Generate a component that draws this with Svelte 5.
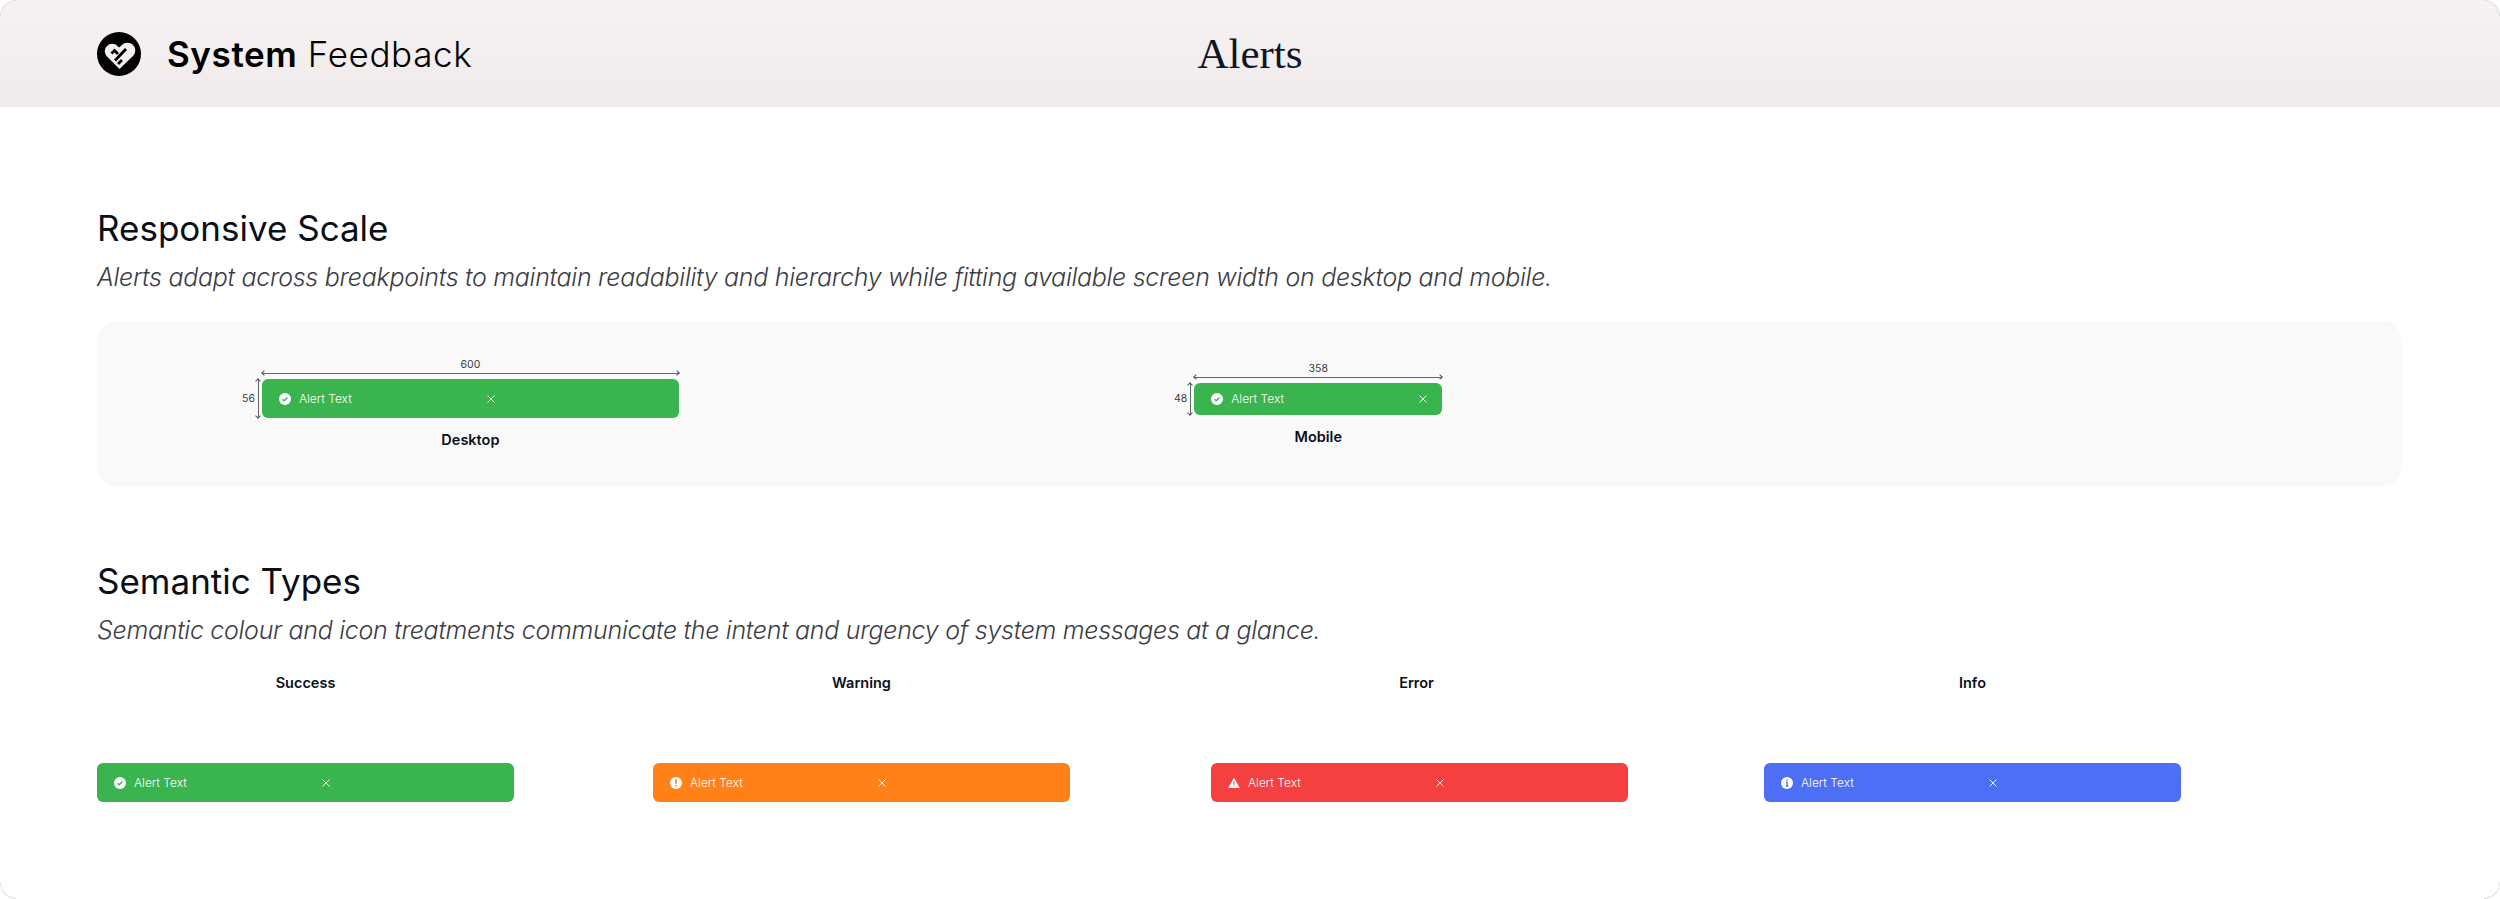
<script>
    const types = [
        { name: 'Success', cls: 'success', icon: 'check', col: 556 },
        { name: 'Warning', cls: 'warning', icon: 'warn', col: 558 },
        { name: 'Error', cls: 'error', icon: 'triangle', col: 553 },
        { name: 'Info', cls: 'info', icon: 'info', col: 417 }
    ];
    const columns = types.map((t) => t.col + 'px').join(' ');
</script>

{#snippet alertIcon(kind)}
    <svg class="icon" viewBox="0 0 12 12">
        {#if kind === 'triangle'}
            <path d="M6 .8 11.8 11H.2z" fill="#fff" />
            <path d="M6 4.2v3.4M6 8.6v1" stroke="#f44040" stroke-width="1.1" fill="none" />
        {:else}
            <circle cx="6" cy="6" r="6" fill="#fff" />
            {#if kind === 'check'}
                <path d="M3.6 6.2 5.3 7.8 8.4 4.6" stroke="#39b44f" stroke-width="1.4" fill="none" />
            {:else if kind === 'warn'}
                <path d="M6 2.4v4.4M6 7.9v1.6" stroke="#ff8117" stroke-width="1.7" fill="none" />
            {:else}
                <path d="M6 2.6v1.3M5 5.4h1.1v3.4M4.8 9h2.5" stroke="#4d6ff5" stroke-width="1.3" fill="none" />
            {/if}
        {/if}
    </svg>
{/snippet}

{#snippet alert(cls, icon, small)}
    <div class="alert {cls}" class:small>
        <div class="alert-inner">
            <div class="alert-main">
                {@render alertIcon(icon)}
                <span>Alert Text</span>
            </div>
            <svg class="close" viewBox="0 0 8 8">
                <path d="M.5.5l7 7M7.5.5l-7 7" stroke="#fff" stroke-width=".9" fill="none" />
            </svg>
        </div>
    </div>
{/snippet}

{#snippet measured(width, height, label, small)}
    <div class="spec" class:small>
        <div class="spec-h">
            <span class="dim">{height}</span>
            <div class="arrow-v"></div>
        </div>
        <div class="spec-body">
            <span class="dim">{width}</span>
            <div class="arrow-h"></div>
            {@render alert('success', 'check', small)}
            <div class="spec-label">{label}</div>
        </div>
    </div>
{/snippet}

<div class="page">
    <span class="corner tl"></span>
    <span class="corner tr"></span>
    <span class="corner bl"></span>
    <span class="corner br"></span>
    <header>
        <div class="brand">
            <svg class="logo" viewBox="0 0 44 44">
                <circle cx="22" cy="22" r="22" fill="#000" />
                <path
                    d="M22.5 37 10.5 25c-3.5-3.5-3.5-8-.5-11 3-3 7.500-3 10.500 0l1.500 1.500 3-2.500c3-3 8-3 11 0 3 3 3 8 0 11z"
                    fill="#f4efef" />
                <path d="M14.500 21.500l3-3 3.500 3.500M18 28.500l11-11.500M21 32l4-4" stroke="#000" stroke-width="2.800" fill="none" />
            </svg>
            <div class="brand-name"><b>System</b> Feedback</div>
        </div>
        <h1>Alerts</h1>
    </header>

    <main>
        <section>
            <h2>Responsive Scale</h2>
            <p>Alerts adapt across breakpoints to maintain readability and hierarchy while fitting available screen width on desktop and mobile.</p>
            <div class="panel">
                <div class="panel-col first">
                    {@render measured(600, 56, 'Desktop', false)}
                </div>
                <div class="panel-col">
                    {@render measured(358, 48, 'Mobile', true)}
                </div>
            </div>
        </section>

        <section class="semantic">
            <h2>Semantic Types</h2>
            <p>Semantic colour and icon treatments communicate the intent and urgency of system messages at a glance.</p>
            <div class="types" style="grid-template-columns: {columns}">
                {#each types as t}
                    <div class="type">
                        <div class="type-label">{t.name}</div>
                        {@render alert(t.cls, t.icon, false)}
                    </div>
                {/each}
            </div>
        </section>
    </main>
</div>

<style>
    :global(body) {
        background: #fff;
    }

    .page {
        position: relative;
        height: 899px;
        overflow: hidden;
        border-radius: 16px;
        background: #fff;
        font-family: Inter, 'Liberation Sans', sans-serif;
        color: #0b0f1a;
    }

    /* hairline only shows on the rounded corners */
    .corner {
        position: absolute;
        z-index: 1;
        width: 16px;
        height: 16px;
        box-sizing: border-box;
        border: 0 solid #dcdcdc;
    }

    .tl {
        top: 0;
        left: 0;
        border-width: 1px 0 0 1px;
        border-top-left-radius: 16px;
    }

    .tr {
        top: 0;
        right: 0;
        border-width: 1px 1px 0 0;
        border-top-right-radius: 16px;
    }

    .bl {
        bottom: 0;
        left: 0;
        border-width: 0 0 1px 1px;
        border-bottom-left-radius: 16px;
    }

    .br {
        bottom: 0;
        right: 0;
        border-width: 0 1px 1px 0;
        border-bottom-right-radius: 16px;
    }

    header {
        position: relative;
        height: 107px;
        padding-left: 97px;
        display: flex;
        align-items: center;
        background: linear-gradient(180deg, #f6f1f2 0%, #f0eaeb 100%);
    }

    .brand {
        display: flex;
        align-items: center;
        gap: 26px;
    }

    .logo {
        width: 44px;
        height: 44px;
    }

    .brand-name {
        font-size: 35px;
        font-weight: 300;
        color: #000;
        letter-spacing: 0.6px;
    }

    .brand-name b {
        font-weight: 600;
    }

    h1 {
        position: absolute;
        left: 0;
        right: 0;
        margin: 0;
        text-align: center;
        font-family: 'Liberation Serif', serif;
        font-size: 43px;
        font-weight: 400;
        color: #0f1524;
    }

    main {
        padding: 98px 98px 0 97px;
    }

    h2 {
        margin: 0;
        font-size: 35px;
        line-height: 46px;
        font-weight: 400;
    }

    section p {
        margin: 8px 0 0;
        font-size: 25px;
        line-height: 36px;
        font-style: italic;
        font-weight: 300;
        letter-spacing: -0.29px;
        color: #3a3d45;
    }

    .panel {
        margin-top: 26px;
        height: 165px;
        background: #f9f9f9;
        border-radius: 20px;
        display: flex;
        align-items: center;
    }

    .panel-col {
        padding-left: 145px;
    }

    .panel-col.first {
        width: 787px;
    }

    .spec {
        display: flex;
        align-items: flex-start;
        gap: 3px;
    }

    .spec-h {
        display: flex;
        align-items: center;
        gap: 3px;
        margin-top: 21px;
        height: 39px;
    }

    .spec.small .spec-h {
        height: 32px;
    }

    .dim {
        font-size: 10.5px;
        line-height: 13px;
        color: #3c3c3c;
    }

    .arrow-v {
        position: relative;
        width: 1px;
        height: 100%;
        background: #666;
    }

    .arrow-v::before,
    .arrow-v::after,
    .arrow-h::before,
    .arrow-h::after {
        content: '';
        position: absolute;
        width: 4px;
        height: 4px;
        border: solid #555;
        box-sizing: border-box;
    }

    .arrow-v::before {
        top: 0;
        left: -2px;
        border-width: 1px 0 0 1px;
        transform: rotate(45deg);
    }

    .arrow-v::after {
        bottom: 0;
        left: -2px;
        border-width: 0 1px 1px 0;
        transform: rotate(45deg);
    }

    .spec-body {
        display: flex;
        flex-direction: column;
        align-items: center;
    }

    .arrow-h {
        position: relative;
        width: 100%;
        height: 1px;
        background: #666;
        margin: 2px 0 5px;
    }

    .arrow-h::before {
        left: 0;
        top: -2px;
        border-width: 1px 0 0 1px;
        transform: rotate(-45deg);
    }

    .arrow-h::after {
        right: 0;
        top: -2px;
        border-width: 1px 1px 0 0;
        transform: rotate(45deg);
    }

    .spec-label,
    .type-label {
        font-size: 14.5px;
        line-height: 18px;
        font-weight: 600;
        text-align: center;
    }

    .spec-label {
        margin-top: 13px;
    }

    .alert {
        width: 417px;
        height: 39px;
        box-sizing: border-box;
        padding-left: 17px;
        border-radius: 6px;
        display: flex;
        align-items: center;
        color: #fff;
    }

    .alert.small {
        width: 248px;
        height: 32px;
    }

    .alert-inner {
        width: 216px;
        display: flex;
        align-items: center;
        justify-content: space-between;
    }

    .alert-main {
        display: flex;
        align-items: center;
        gap: 8px;
        font-size: 12px;
        font-weight: 300;
    }

    .icon {
        width: 12px;
        height: 12px;
    }

    .close {
        width: 8px;
        height: 8px;
    }

    .success {
        background: #39b44f;
    }

    .warning {
        background: #ff8117;
    }

    .error {
        background: #f44040;
    }

    .info {
        background: #4d6ff5;
    }

    .semantic {
        margin-top: 72px;
    }

    .types {
        display: grid;
        margin-top: 26px;
    }

    .type-label {
        width: 417px;
        margin-bottom: 71px;
    }

    .type:nth-child(3) .type-label {
        width: 411px;
    }
</style>
